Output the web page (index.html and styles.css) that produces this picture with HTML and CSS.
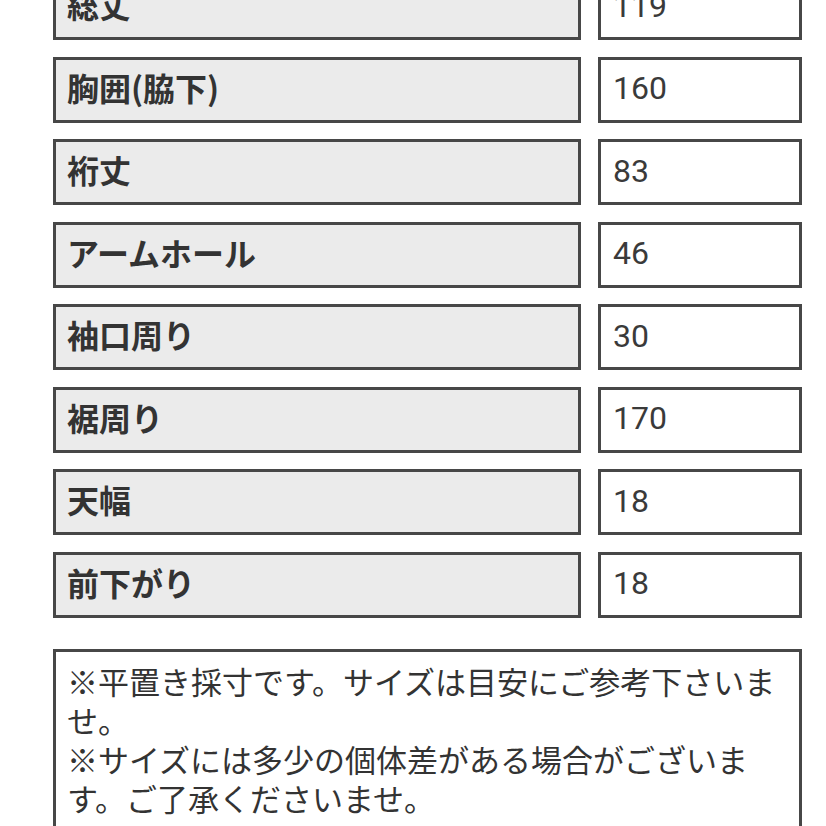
FILE: index.html
```html
<!DOCTYPE html>
<html lang="ja">
<head>
<meta charset="utf-8">
<link rel="stylesheet" href="styles.css">
</head>
<body>
<div class="page">
  <div class="table">
    <div class="label">総丈</div><div class="value">119</div>
    <div class="label">胸囲(脇下)</div><div class="value">160</div>
    <div class="label">裄丈</div><div class="value">83</div>
    <div class="label">アームホール</div><div class="value">46</div>
    <div class="label">袖口周り</div><div class="value">30</div>
    <div class="label">裾周り</div><div class="value">170</div>
    <div class="label">天幅</div><div class="value">18</div>
    <div class="label">前下がり</div><div class="value">18</div>
  </div>
  <div class="note">※平置き採寸です。サイズは目安にご参考下さいませ。<br>※サイズには多少の個体差がある場合がございます。ご了承くださいませ。</div>
</div>
</body>
</html>
```

FILE: styles.css
```css
html, body {
  margin: 0;
  padding: 0;
  background: #ffffff;
}
.page {
  width: 749px;
  margin-left: 53px;
  margin-top: -26px;
  font-family: "Noto Sans CJK JP", "Noto Sans", sans-serif;
  color: #333333;
}
.table {
  display: grid;
  grid-template-columns: 528px 204px;
  column-gap: 17px;
  row-gap: 16.5px;
  grid-auto-rows: 66px;
}
.label, .value {
  box-sizing: border-box;
  border: 3px solid #474747;
  display: flex;
  align-items: center;
  padding-left: 11px;
}
.label {
  background: #ebebeb;
  font-weight: 700;
  font-size: 32px;
  color: #333333;
  padding-bottom: 6px;
}
.value {
  background: #ffffff;
  font-family: Roboto, "Noto Sans", sans-serif;
  font-size: 32px;
  padding-left: 12px;
  padding-bottom: 3px;
  color: #3a3a3a;
}
.note {
  box-sizing: border-box;
  margin-top: 31px;
  border: 3px solid #474747;
  padding: 9px 10px 10px 11px;
  font-size: 31px;
  line-height: 39px;
  color: #333333;
  min-height: 220px;
}
```
